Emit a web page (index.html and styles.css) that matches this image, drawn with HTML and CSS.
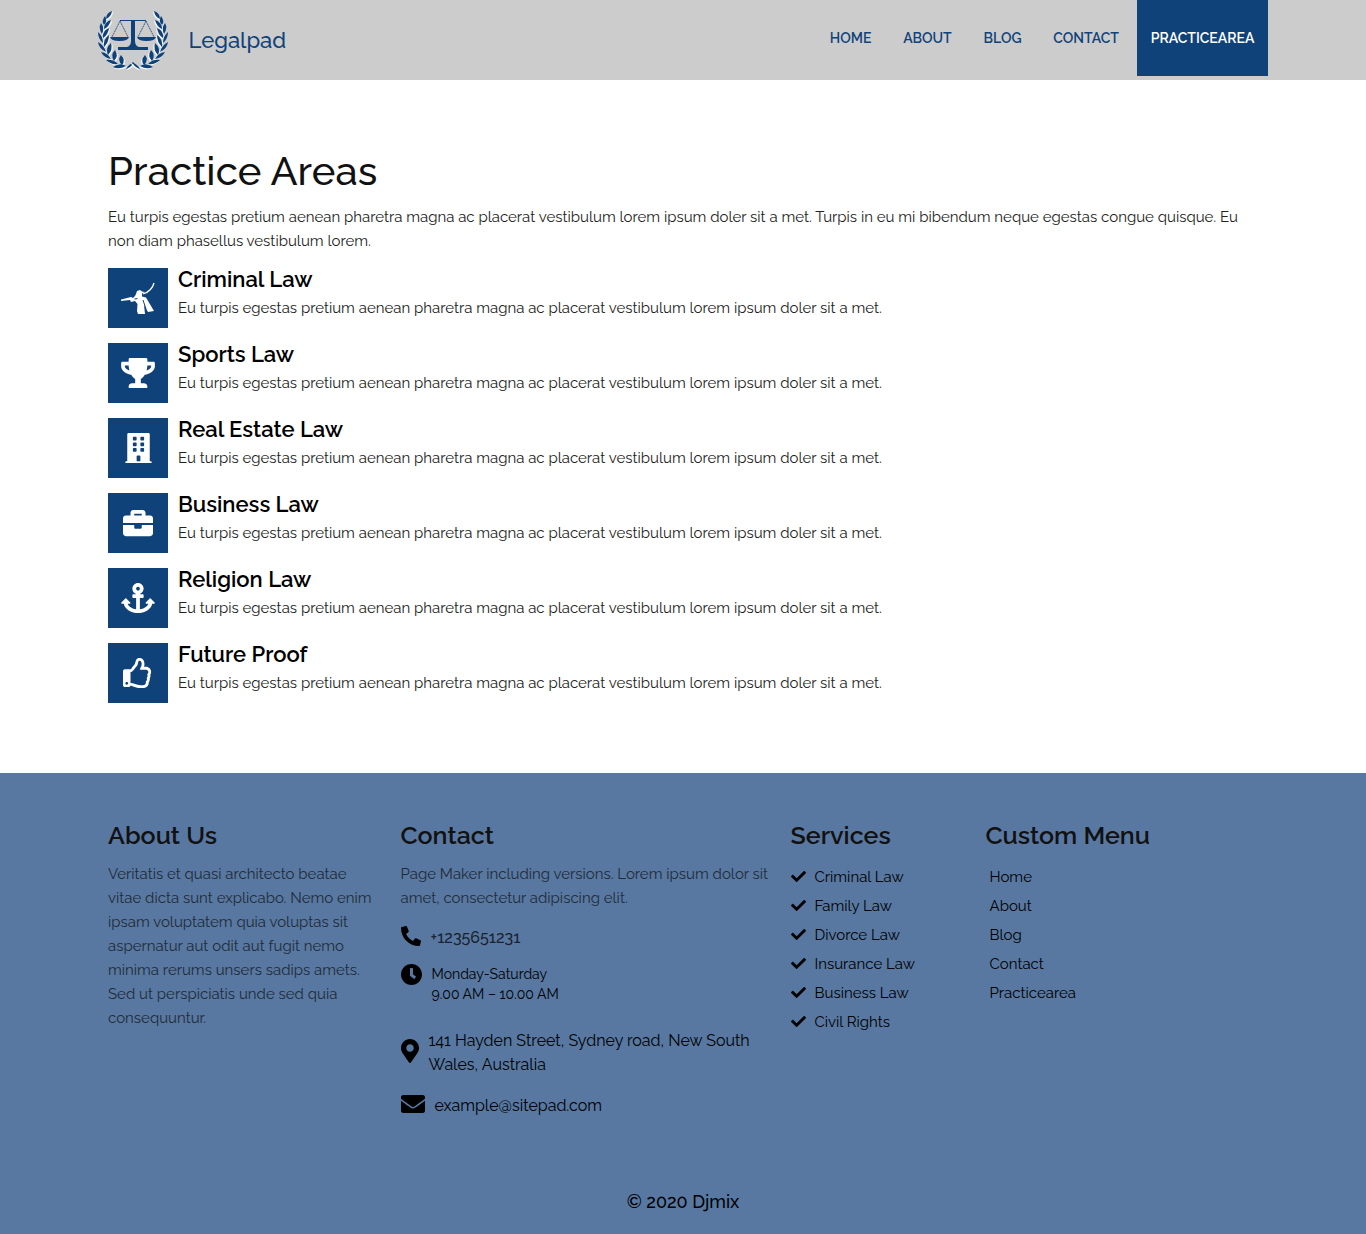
FILE: index.html
```html
<!DOCTYPE html>
<html lang="en">
<head>
<meta charset="utf-8">
<title>Practice Areas - Legalpad</title>
<link rel="stylesheet" href="styles.css">
</head>
<body>
<svg class="defs" aria-hidden="true">
  <symbol id="check" viewBox="0 0 512 512"><path d="M173.898 439.404l-166.400-166.400c-9.997-9.997-9.997-26.206 0-36.204l36.203-36.204c9.997-9.998 26.207-9.998 36.204 0L192 312.690 432.095 72.596c9.997-9.997 26.207-9.997 36.204 0l36.203 36.204c9.997 9.997 9.997 26.206 0 36.204l-294.400 294.401c-9.998 9.997-26.207 9.997-36.204-.001z"/></symbol>
  <path id="leaf-shapes" d="M14 1q-6 2-6 8q5-2 6-8zM7 6q-4 5-1 9q4-4 1-9zM13 10q-7 2-7 9q5-2 7-9zM3 13q-3 5 1 11q3-6-1-11zM11 18q-7 3-6 10q5-3 6-10zM0 22q0 7 5 11q0-7-5-11zM11 25q-6 4-5 12q5-5 5-12zM0 32q1 7 8 10q-2-7-8-10zM13 33q-6 5-3 12q5-5 3-12zM3 42q3 6 10 7q-3-6-10-7zM17 40q-5 5-1 11q5-5 1-11zM8 50q5 5 12 4q-5-5-12-4zM23 45q-4 5 1 10q4-5-1-10zM15 57q6 3 13-1q-6-4-13 1zM28 59q2-4 8-7q-2 5-8 7z"/>
  <symbol id="leaves" viewBox="0 0 37 60">
    <use href="#leaf-shapes" class="leaf-shine" x="1" y="1"/>
    <use href="#leaf-shapes" class="leaf"/>
  </symbol>
</svg>

<header class="header">
  <div class="bar">
    <a class="brand">
      <svg class="logo" viewBox="0 0 70 60">
        <use href="#leaves" width="37" height="60"/>
        <use href="#leaves" width="37" height="60" transform="translate(70 0) scale(-1 1)"/>
        <path class="scale-fill" d="M33 10h4v21q0 5 4 6h9v3H20v-3h9q4-1 4-6zM12 27h19q-1 4-9.500 4t-9.500-4zM39 27h19q-1 4-9.500 4t-9.500-4z"/>
        <path class="scale-line" d="M22 10.500h26"/>
        <path class="scale-chain" d="M22 11l-8 16M22 11l8 16M48 11l-8 16M48 11l8 16"/>
      </svg>
      <span class="brand-name">Legalpad</span>
    </a>
    <nav class="nav">
      <a class="nav-link">HOME</a>
      <a class="nav-link">ABOUT</a>
      <a class="nav-link">BLOG</a>
      <a class="nav-link last">CONTACT</a>
      <a class="nav-link active">PRACTICEAREA</a>
    </nav>
  </div>
</header>

<main class="main">
  <h1 class="title">Practice Areas</h1>
  <p class="intro">Eu turpis egestas pretium aenean pharetra magna ac placerat vestibulum lorem ipsum doler sit a met. Turpis in eu mi bibendum neque egestas congue quisque. Eu<br>non diam phasellus vestibulum lorem.</p>
  <div class="areas">
    <article class="area">
      <div class="tile"><svg width="36" height="36" viewBox="0 0 36 36"><path d="M1 19.500l10-2.500 2 1 2-2 1-2 1-3 3-1 2 1.500 3 .5-3 1.500v3l4 1 8 13.500-6 1-4-7 1 9h-7l-1-3 .5-7-2.500-3-4 1-1-2-9 1z"/><path class="plume" d="M23 14q9-3 11-11"/><path class="fold" d="M14.500 19l3-.5M23 20l3 9"/></svg></div>
      <div><h2 class="area-title">Criminal Law</h2><p class="area-text">Eu turpis egestas pretium aenean pharetra magna ac placerat vestibulum lorem ipsum doler sit a met.</p></div>
    </article>
    <article class="area">
      <div class="tile"><svg width="34" height="30" viewBox="0 0 576 512"><path d="M552 64H448V24c0-13.300-10.700-24-24-24H152c-13.300 0-24 10.700-24 24v40H24C10.700 64 0 74.700 0 88v56c0 35.700 22.500 72.400 61.900 100.700 31.500 22.700 69.800 37.100 110 41.700C203.300 338.500 240 360 240 360v72h-48c-35.300 0-64 20.700-64 56v12c0 6.600 5.400 12 12 12h296c6.600 0 12-5.400 12-12v-12c0-35.300-28.700-56-64-56h-48v-72s36.700-21.500 68.100-73.600c40.300-4.600 78.600-19 110-41.700 39.300-28.300 61.900-65 61.900-100.700V88c0-13.300-10.700-24-24-24zM99.300 192.800C74.900 175.200 64 155.600 64 144v-16h64.200c1 32.600 5.800 61.200 12.800 86.200-15.100-5.200-29.200-12.400-41.700-21.400zM512 144c0 16.100-17.700 36.100-35.300 48.800-12.500 9-26.700 16.200-41.800 21.400 7-25 11.800-53.600 12.800-86.200H512v16z"/></svg></div>
      <div><h2 class="area-title">Sports Law</h2><p class="area-text">Eu turpis egestas pretium aenean pharetra magna ac placerat vestibulum lorem ipsum doler sit a met.</p></div>
    </article>
    <article class="area">
      <div class="tile"><svg width="27" height="30" viewBox="0 0 448 512"><path d="M436 480h-20V24c0-13.255-10.745-24-24-24H56C42.745 0 32 10.745 32 24v456H12c-6.627 0-12 5.373-12 12v20h448v-20c0-6.627-5.373-12-12-12zM128 76c0-6.627 5.373-12 12-12h40c6.627 0 12 5.373 12 12v40c0 6.627-5.373 12-12 12h-40c-6.627 0-12-5.373-12-12V76zm0 96c0-6.627 5.373-12 12-12h40c6.627 0 12 5.373 12 12v40c0 6.627-5.373 12-12 12h-40c-6.627 0-12-5.373-12-12v-40zm52 148h-40c-6.627 0-12-5.373-12-12v-40c0-6.627 5.373-12 12-12h40c6.627 0 12 5.373 12 12v40c0 6.627-5.373 12-12 12zm76 160h-64v-84c0-6.627 5.373-12 12-12h40c6.627 0 12 5.373 12 12v84zm64-172c0 6.627-5.373 12-12 12h-40c-6.627 0-12-5.373-12-12v-40c0-6.627 5.373-12 12-12h40c6.627 0 12 5.373 12 12v40zm0-96c0 6.627-5.373 12-12 12h-40c-6.627 0-12-5.373-12-12v-40c0-6.627 5.373-12 12-12h40c6.627 0 12 5.373 12 12v40zm0-96c0 6.627-5.373 12-12 12h-40c-6.627 0-12-5.373-12-12V76c0-6.627 5.373-12 12-12h40c6.627 0 12 5.373 12 12v40z"/></svg></div>
      <div><h2 class="area-title">Real Estate Law</h2><p class="area-text">Eu turpis egestas pretium aenean pharetra magna ac placerat vestibulum lorem ipsum doler sit a met.</p></div>
    </article>
    <article class="area">
      <div class="tile"><svg width="30" height="30" viewBox="0 0 512 512"><path d="M320 336c0 8.840-7.160 16-16 16h-96c-8.840 0-16-7.160-16-16v-48H0v144c0 25.600 22.400 48 48 48h416c25.600 0 48-22.400 48-48V288H320v48zm144-208h-80V80c0-25.600-22.400-48-48-48H176c-25.600 0-48 22.400-48 48v48H48c-25.600 0-48 22.400-48 48v80h512v-80c0-25.600-22.400-48-48-48zm-144 0H192V96h128v32z"/></svg></div>
      <div><h2 class="area-title">Business Law</h2><p class="area-text">Eu turpis egestas pretium aenean pharetra magna ac placerat vestibulum lorem ipsum doler sit a met.</p></div>
    </article>
    <article class="area">
      <div class="tile"><svg width="34" height="30" viewBox="0 0 576 512"><path d="M12.971 352h32.394C67.172 454.735 181.944 512 288 512c106.229 0 220.853-57.380 242.635-160h32.394c10.691 0 16.045-12.926 8.485-20.485l-67.029-67.029c-4.686-4.686-12.284-4.686-16.971 0l-67.029 67.029c-7.560 7.560-2.206 20.485 8.485 20.485h35.146c-20.290 54.317-84.963 86.588-144.117 94.015V256h52c6.627 0 12-5.373 12-12v-40c0-6.627-5.373-12-12-12h-52v-5.470c37.281-13.226 63.995-48.811 64-90.640C384.010 43.138 340.970-.128 288.230 0 235.310.129 192 43.046 192 96c0 41.798 26.716 77.350 64 90.530V192h-52c-6.627 0-12 5.373-12 12v40c0 6.627 5.373 12 12 12h52v190.015c-58.936-7.399-123.820-39.679-144.117-94.015h35.146c10.691 0 16.045-12.926 8.485-20.485l-67.029-67.029c-4.686-4.686-12.284-4.686-16.971 0L4.485 331.515C-3.074 339.074 2.280 352 12.971 352zM288 64c17.645 0 32 14.355 32 32s-14.355 32-32 32-32-14.355-32-32 14.355-32 32-32z"/></svg></div>
      <div><h2 class="area-title">Religion Law</h2><p class="area-text">Eu turpis egestas pretium aenean pharetra magna ac placerat vestibulum lorem ipsum doler sit a met.</p></div>
    </article>
    <article class="area">
      <div class="tile"><svg width="30" height="30" viewBox="0 0 512 512"><path d="M466.270 286.690C475.040 271.840 480 256 480 236.850c0-44.015-37.218-85.580-85.820-85.580H357.700c4.920-12.810 8.850-28.130 8.850-46.540C366.550 31.936 328.860 0 271.280 0c-61.607 0-58.093 94.933-71.760 108.600-22.747 22.747-49.615 66.447-68.760 83.400H32c-17.673 0-32 14.327-32 32v240c0 17.673 14.327 32 32 32h64c14.893 0 27.408-10.174 30.978-23.950 44.509 1.001 75.060 39.940 177.802 39.940 7.220 0 15.220.010 22.220.010 77.117 0 111.986-39.423 112.940-95.330 13.319-18.425 20.299-43.122 17.340-66.990 9.854-18.452 13.664-40.343 8.990-62.990zm-61.750 53.830c12.560 21.130 1.260 49.410-13.940 57.570 7.700 48.780-17.608 65.900-53.120 65.900h-37.820c-71.639 0-118.029-37.820-171.640-37.820V240h10.920c28.360 0 67.980-70.890 94.540-97.460 28.360-28.360 18.910-75.630 37.820-94.540 47.270 0 47.270 32.980 47.270 56.730 0 39.170-28.360 56.720-28.360 94.540h103.990c21.110 0 37.730 18.910 37.820 37.820.090 18.900-12.820 37.810-22.270 37.810 13.489 14.555 16.371 45.236-5.210 65.620zM88 432c0 13.255-10.745 24-24 24s-24-10.745-24-24 10.745-24 24-24 24 10.745 24 24z"/></svg></div>
      <div><h2 class="area-title">Future Proof</h2><p class="area-text">Eu turpis egestas pretium aenean pharetra magna ac placerat vestibulum lorem ipsum doler sit a met.</p></div>
    </article>
  </div>
</main>

<footer class="footer">
  <div class="columns">
    <section>
      <h3 class="col-title">About Us</h3>
      <p class="col-text">Veritatis et quasi architecto beatae<br>vitae dicta sunt explicabo. Nemo enim<br>ipsam voluptatem quia voluptas sit<br>aspernatur aut odit aut fugit nemo<br>minima rerums unsers sadips amets.<br>Sed ut perspiciatis unde sed quia<br>consequuntur.</p>
    </section>
    <section>
      <h3 class="col-title">Contact</h3>
      <p class="col-text">Page Maker including versions. Lorem ipsum dolor sit<br>amet, consectetur adipiscing elit.</p>
      <div class="contact phone"><svg width="20" height="20" viewBox="0 0 512 512"><path d="M493.400 24.600l-104-24c-11.300-2.600-22.900 3.300-27.500 13.900l-48 112c-4.200 9.800-1.400 21.300 6.900 28l60.600 49.600c-36 76.700-98.900 140.500-177.200 177.200l-49.600-60.600c-6.800-8.300-18.200-11.100-28-6.900l-112 48C3.900 366.500-2 378.100.6 389.400l24 104C27.100 504.200 36.700 512 48 512c256.100 0 464-207.500 464-464 0-11.200-7.700-20.900-18.600-23.400z" transform="translate(512 0) scale(-1 1)"/></svg><span>+1235651231</span></div>
      <div class="contact hours"><svg width="21" height="21" viewBox="8 8 496 496"><path d="M256 8C119 8 8 119 8 256s111 248 248 248 248-111 248-248S393 8 256 8zm57.100 350.100L224.900 294c-3.100-2.300-4.900-5.900-4.900-9.700V116c0-6.600 5.400-12 12-12h48c6.600 0 12 5.400 12 12v137.700l63.500 46.200c5.400 3.900 6.500 11.400 2.600 16.800l-28.200 38.800c-3.900 5.300-11.400 6.500-16.800 2.600z"/></svg><span>Monday-Saturday<br>9.00 AM – 10.00 AM</span></div>
      <div class="contact address"><svg width="18" height="24" viewBox="0 0 384 512"><path d="M172.268 501.670C26.970 291.031 0 269.413 0 192 0 85.961 85.961 0 192 0s192 85.961 192 192c0 77.413-26.970 99.031-172.268 309.670-9.535 13.774-29.930 13.773-39.464 0zM192 272c44.183 0 80-35.817 80-80s-35.817-80-80-80-80 35.817-80 80 35.817 80 80 80z"/></svg><span>141 Hayden Street, Sydney road, New South<br>Wales, Australia</span></div>
      <div class="contact mail"><svg width="24" height="24" viewBox="0 0 512 512"><path d="M502.300 190.800c3.900-3.100 9.700-.2 9.700 4.700V400c0 26.500-21.500 48-48 48H48c-26.500 0-48-21.500-48-48V195.600c0-5 5.700-7.800 9.700-4.700 22.400 17.400 52.100 39.500 154.100 113.600 21.100 15.400 56.700 47.800 92.200 47.600 35.700.3 72-32.800 92.300-47.600 102-74.100 131.600-96.300 154-113.700zM256 320c23.200.4 56.600-29.200 73.400-41.400 132.700-96.300 142.800-104.700 173.400-128.700 5.800-4.500 9.200-11.500 9.200-18.900v-19c0-26.500-21.500-48-48-48H48c-26.500 0-48 21.500-48 48v19c0 7.400 3.400 14.300 9.200 18.900 30.600 23.900 40.700 32.400 173.400 128.700 16.800 12.200 50.200 41.800 73.400 41.400z"/></svg><span>example@sitepad.com</span></div>
    </section>
    <section>
      <h3 class="col-title">Services</h3>
      <ul class="list">
        <li><svg class="check"><use href="#check"/></svg>Criminal Law</li>
        <li><svg class="check"><use href="#check"/></svg>Family Law</li>
        <li><svg class="check"><use href="#check"/></svg>Divorce Law</li>
        <li><svg class="check"><use href="#check"/></svg>Insurance Law</li>
        <li><svg class="check"><use href="#check"/></svg>Business Law</li>
        <li><svg class="check"><use href="#check"/></svg>Civil Rights</li>
      </ul>
    </section>
    <section>
      <h3 class="col-title">Custom Menu</h3>
      <ul class="list menu">
        <li>Home</li><li>About</li><li>Blog</li><li>Contact</li><li>Practicearea</li>
      </ul>
    </section>
  </div>
  <p class="copyright">© 2020 Djmix</p>
</footer>
</body>
</html>
```

FILE: styles.css
```css
* { box-sizing: border-box; }
body { margin: 0; background: #fff; color: #000; font-family: Raleway, Lato, sans-serif; font-size: 15px; line-height: 24px; }
h1, h2, h3, p, ul { margin: 0; padding: 0; }
ul { list-style: none; }
.defs { display: block; width: 0; height: 0; }

.header { height: 80px; background: #ccc; color: #10427a; }
.bar { width: 1170px; height: 80px; margin: 0 auto; display: flex; justify-content: space-between; align-items: flex-start; }
.brand { display: flex; gap: 20.500px; padding-top: 10px; }
.logo { width: 70px; height: 60px; }
.leaf { fill: #10427a; }
.leaf-shine { fill: #f2f7fc; stroke: #f2f7fc; stroke-width: .4; }
.scale-fill { fill: #10427a; }
.scale-line { fill: none; stroke: #10427a; stroke-width: 1; }
.scale-chain { fill: none; stroke: #10427a; stroke-width: .8; stroke-dasharray: 2 .6; }
.brand-name { font-size: 22px; line-height: 60px; font-weight: 500; }
.nav { display: flex; }
.nav-link { height: 76px; line-height: 76px; margin-right: 31.800px; font-size: 14px; font-weight: 600; white-space: nowrap; }
.last { margin-right: 18px; }
.nav-link.active { width: 131px; margin-right: 0; text-align: center; background: #10427a; color: #fff; }

.main { width: 1150px; height: 693px; margin: 0 auto; padding-top: 67px; }
.title { font-size: 40px; line-height: 48px; font-weight: 500; letter-spacing: .1px; color: #111; }
.intro { margin-top: 10px; white-space: nowrap; color: #222; }
.areas { display: grid; gap: 15px; margin-top: 15px; }
.area { display: flex; gap: 10px; height: 60px; }
.tile { width: 60px; height: 60px; display: flex; align-items: center; justify-content: center; background: #10427a; fill: #fff; }
.plume { fill: none; stroke: #fff; stroke-width: 1.3; }
.fold { fill: none; stroke: #10427a; stroke-width: 1; }
.area-title { font-size: 22px; line-height: 22px; font-weight: 600; }
.area-text { margin-top: 6px; color: #222; }

.footer { height: 461px; padding-top: 47px; background: #5878a1; }
.columns { display: grid; grid-template-columns: 292.500px 390px 195px 272.500px; width: 1150px; height: 366px; margin: 0 auto; white-space: nowrap; }
.col-title { font-size: 25px; line-height: 30px; font-weight: 600; color: #111; }
.col-text { margin-top: 12px; color: #222b38; }
.contact { display: flex; align-items: flex-start; gap: 10px; }
.contact svg { flex: none; }
.phone { height: 38px; margin-top: 16px; font-size: 16px; line-height: 24px; font-weight: 500; color: #1a222d; }
.phone svg { fill: #000; }
.hours { height: 65px; font-size: 14px; line-height: 20px; }
.address { height: 65px; font-size: 16px; }
.address svg { margin-top: 10px; }
.mail { font-size: 16px; }
.mail svg { margin-top: -2px; }
.list { margin-top: 15px; display: grid; gap: 5px; }
.list li { display: flex; align-items: center; height: 24px; gap: 9px; }
.check { width: 15px; height: 15px; margin-bottom: 2px; }
.menu { padding-left: 4px; }
.copyright { text-align: center; font-size: 18px; line-height: 32px; font-weight: 500; }
```
